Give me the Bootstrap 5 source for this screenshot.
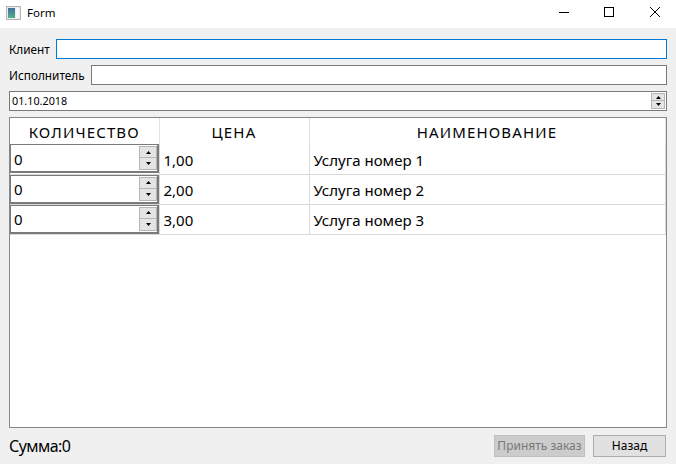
<!DOCTYPE html>
<html lang="ru">
<head>
  <meta charset="UTF-8" />
  <title>Form</title>
  <link href="https://cdn.jsdelivr.net/npm/bootstrap@5.3.2/dist/css/bootstrap.min.css" rel="stylesheet" />
  <style>
    html, body { height: 100%; }
    body {
      width: 676px;
      height: 464px;
      overflow: hidden;
      background: #f0f0f0;
      color: #000;
      font-family: "Noto Sans", "Liberation Sans", sans-serif;
      font-size: 11.8px;
    }
    .title-bar { height: 28px; background: #fff; }
    .title-icon { margin-left: 6px; margin-right: 6px; margin-top: -2px; }
    .title-text { font-size: 11.5px; margin-top: -2px; }
    .win-btns { gap: 34px; margin-right: 15px; margin-top: -4px; }
    .form-area { padding: 11px 9px 0 9px; gap: 6px; }
    .line-edit {
      height: 20px;
      background: #fff;
      border: 1px solid #7a7a7a;
      font-size: 10.8px;
      padding-left: 2px;
    }
    .line-edit.focused { border-color: #0078d7; }
    .field-label { margin-right: 6px; line-height: 20px; }
    .spin-arrows { width: 14px; height: 16px; margin-right: 1px; }
    .spin-part {
      height: 8px;
      background: #e4e4e4;
      border: 1px solid #b5b5b5;
    }
    .spin-part + .spin-part { border-top: 0; height: 8px; }
    .table-box {
      height: 311px;
      background: #fff;
      border: 1px solid #828790;
    }
    .order-table { width: 655px; table-layout: fixed; border-collapse: collapse; }
    .order-table th {
      height: 26px;
      padding: 3px 0 0 0;
      font-weight: 400;
      font-size: 15px;
      letter-spacing: 1.15px;
      text-align: center;
      border-right: 1px solid #e2e2e2;
      vertical-align: middle;
    }
    .order-table td {
      height: 30px;
      padding: 2px 0 0 4px;
      font-size: 15px;
      border-right: 1px solid #d9d9d9;
      border-bottom: 1px solid #d9d9d9;
      vertical-align: middle;
    }
    .order-table td.qty-cell { padding: 0; }
    .qty-spin {
      width: 149px;
      height: 29px;
      background: #fff;
      border: 2px solid #7a7a7a;
      border-width: 1px 2px 2px 1px;
      padding-left: 3px;
      font-size: 15px;
    }
    .qty-spin > span { margin-top: 2px; }
    .qty-spin .spin-arrows { width: 18px; height: 24px; margin-right: 0; }
    .qty-spin .spin-part { height: 12px; }
    .qty-spin .spin-part + .spin-part { height: 12px; }
    .bottom-row { padding: 7px 10px 0 9px; }
    .sum-text { font-size: 16px; letter-spacing: -.55px; line-height: 22px; margin-top: 0; }
    .qt-btn {
      height: 22px;
      border: 1px solid #adadad;
      background: #e1e1e1;
      font-size: 12px;
      line-height: 20px;
      text-align: center;
    }
    .qt-btn.off { background: #cccccc; border-color: #bfbfbf; color: #787878; width: 91px; margin-right: 8px; }
    .qt-btn.back { width: 73px; }
  </style>
</head>
<body>
  <div class="title-bar d-flex align-items-center">
    <svg class="title-icon" width="15" height="14" viewBox="0 0 15 14">
      <defs>
        <linearGradient id="iconFill" x1="0" y1="0" x2="0" y2="1">
          <stop offset="0" stop-color="#3f6f9f" />
          <stop offset="1" stop-color="#52b08a" />
        </linearGradient>
      </defs>
      <rect x="0.5" y="0.5" width="14" height="13" fill="#ececec" stroke="#b4b4b4" />
      <rect x="2" y="2" width="7" height="10" fill="url(#iconFill)" />
      <rect x="10" y="2" width="3" height="10" fill="#f8f8f8" />
    </svg>
    <span class="title-text">Form</span>
    <div class="win-btns ms-auto d-flex">
      <svg width="12" height="12" viewBox="0 0 12 12"><path d="M2 6.5H12" stroke="#000" fill="none" /></svg>
      <svg width="12" height="12" viewBox="0 0 12 12"><rect x="1.5" y="1.5" width="9" height="9" stroke="#000" fill="none" /></svg>
      <svg width="12" height="12" viewBox="0 0 12 12"><path d="M1 1L11 11M11 1L1 11" stroke="#000" fill="none" /></svg>
    </div>
  </div>

  <div class="form-area d-flex flex-column">
    <div class="d-flex">
      <span class="field-label">Клиент</span>
      <div class="line-edit focused flex-grow-1"></div>
    </div>
    <div class="d-flex">
      <span class="field-label">Исполнитель</span>
      <div class="line-edit flex-grow-1"></div>
    </div>
    <div class="line-edit d-flex align-items-center justify-content-between">
      <span>01.10.2018</span>
      <div class="spin-arrows">
        <div class="spin-part d-flex align-items-center justify-content-center">
          <svg width="5" height="3" viewBox="0 0 5 3"><path d="M2.5 0L5 3H0Z" fill="#000" /></svg>
        </div>
        <div class="spin-part d-flex align-items-center justify-content-center">
          <svg width="5" height="3" viewBox="0 0 5 3"><path d="M0 0H5L2.5 3Z" fill="#000" /></svg>
        </div>
      </div>
    </div>
    <div class="table-box">
      <table class="order-table">
        <colgroup><col style="width:149px" /><col style="width:150px" /><col style="width:356px" /></colgroup>
        <thead>
          <tr><th>КОЛИЧЕСТВО</th><th>ЦЕНА</th><th>НАИМЕНОВАНИЕ</th></tr>
        </thead>
        <tbody id="rows"></tbody>
      </table>
    </div>
  </div>

  <div class="bottom-row d-flex align-items-start">
    <span class="sum-text">Сумма:0</span>
    <div class="ms-auto d-flex">
      <div class="qt-btn off">Принять заказ</div>
      <div class="qt-btn back">Назад</div>
    </div>
  </div>

  <script>
    const items = [["1,00", "Услуга номер 1"], ["2,00", "Услуга номер 2"], ["3,00", "Услуга номер 3"]];
    const up = '<svg width="5" height="3" viewBox="0 0 5 3"><path d="M2.5 0L5 3H0Z" fill="#000"/></svg>';
    const down = '<svg width="5" height="3" viewBox="0 0 5 3"><path d="M0 0H5L2.5 3Z" fill="#000"/></svg>';
    document.getElementById("rows").innerHTML = items.map(([price, name]) => `
      <tr>
        <td class="qty-cell">
          <div class="qty-spin d-flex align-items-center justify-content-between">
            <span>0</span>
            <div class="spin-arrows">
              <div class="spin-part d-flex align-items-center justify-content-center">${up}</div>
              <div class="spin-part d-flex align-items-center justify-content-center">${down}</div>
            </div>
          </div>
        </td>
        <td>${price}</td>
        <td>${name}</td>
      </tr>`).join("");
  </script>
  <script src="https://cdn.jsdelivr.net/npm/bootstrap@5.3.2/dist/js/bootstrap.bundle.min.js"></script>
</body>
</html>
